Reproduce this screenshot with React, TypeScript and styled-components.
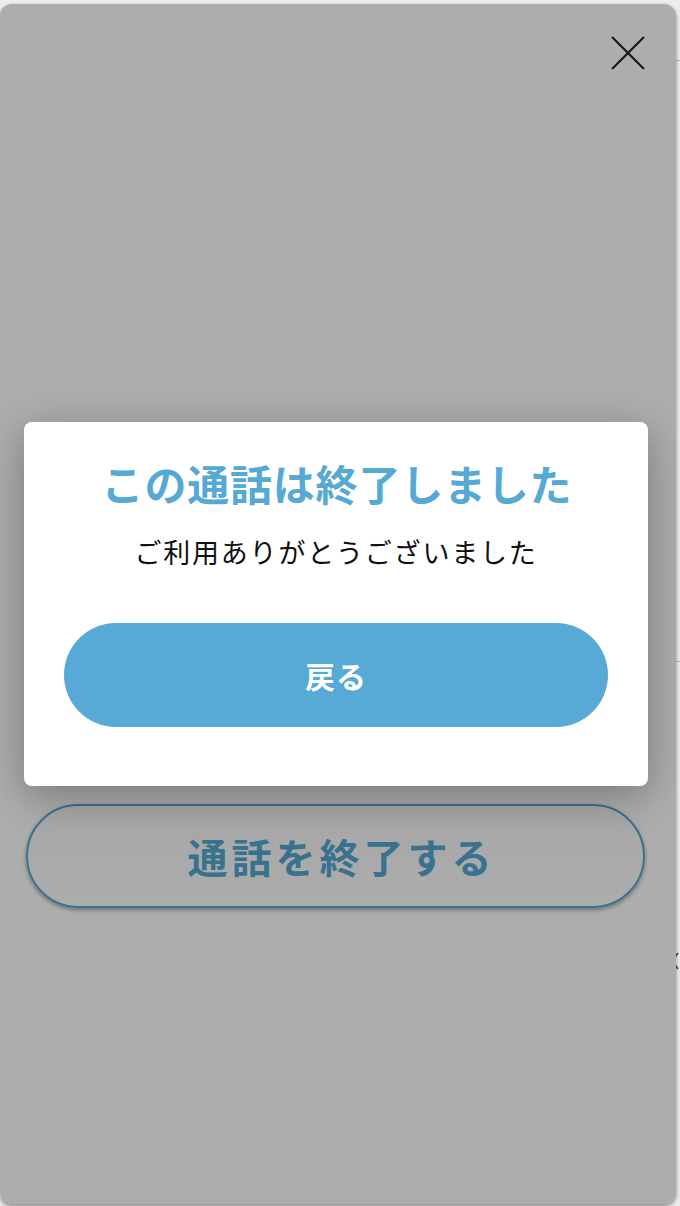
import styled, { createGlobalStyle } from "styled-components";

const GlobalStyle = createGlobalStyle`
  html, body {
    margin: 0;
    padding: 0;
    background: #ededed;
  }
  body {
    font-family: "Noto Sans CJK JP", "Noto Sans", sans-serif;
  }
`;

const Screen = styled.div`
  position: relative;
  width: 680px;
  height: 1206px;
  overflow: hidden;
  background: #ededed;
`;

// the page sitting behind the sheet (only a sliver shows on the right)
const BackPage = styled.div`
  display: flex;
  flex-direction: column;
  height: 100%;
`;

const BackHeader = styled.div`
  height: 60px;
  border-bottom: 1px solid #b4b4b4;
`;

const BackSection = styled.div`
  height: 600px;
  border-bottom: 1px solid #b4b4b4;
`;

const BackRow = styled.div`
  display: flex;
  justify-content: flex-end;
  padding-top: 290px;
`;

const Sheet = styled.div`
  position: absolute;
  top: 4px;
  left: 0;
  width: 676px;
  height: 1200px;
  background: #ffffff;
  border-radius: 12px;
  box-shadow: 0 2px 4px rgba(0, 0, 0, 0.45);
  display: flex;
  flex-direction: column;
  overflow: hidden;
`;

const TopBar = styled.div`
  display: flex;
  justify-content: flex-end;
  padding: 32px 31px 0 0;
`;

const CloseButton = styled.button`
  width: 34px;
  height: 34px;
  padding: 0;
  border: none;
  background: transparent;
  display: flex;
  align-items: center;
  justify-content: center;
`;

const Stage = styled.div`
  height: 734px;
`;

const EndCallButton = styled.button`
  margin-left: 26px;
  width: 619px;
  height: 104px;
  border-radius: 52px;
  border: 2px solid #55a9d3;
  background: linear-gradient(180deg, #f6f6f6 0%, #ffffff 100%);
  box-shadow: 0 2px 4px rgba(0, 0, 0, 0.35);
  color: #55a9d3;
  font-family: "Noto Sans CJK JP", sans-serif;
  font-size: 40px;
  font-weight: 700;
  letter-spacing: 4px;
  padding: 0 0 0 12px;
`;

const Overlay = styled.div`
  position: absolute;
  inset: 0;
  background: rgba(0, 0, 0, 0.32);
  display: flex;
  align-items: center;
  padding-left: 24px;
`;

const Modal = styled.div`
  width: 624px;
  height: 364px;
  box-sizing: border-box;
  background: #ffffff;
  border-radius: 8px;
  box-shadow: 0 10px 40px rgba(0, 0, 0, 0.3);
  display: flex;
  flex-direction: column;
  align-items: center;
  padding: 38px 40px 0;
`;

const Title = styled.h2`
  margin: 0;
  color: #55a9d3;
  font-size: 42px;
  font-weight: 700;
  line-height: 46px;
  letter-spacing: 0.8px;
  padding-left: 2px;
`;

const Message = styled.p`
  margin: 28px 0 0;
  color: #111;
  font-size: 27px;
  font-weight: 400;
  line-height: 36px;
  letter-spacing: 1.8px;
`;

const BackButton = styled.button`
  margin-top: 53px;
  width: 544px;
  height: 104px;
  border: none;
  border-radius: 52px;
  background: #56aad5;
  color: #ffffff;
  font-family: "Noto Sans CJK JP", sans-serif;
  font-size: 30px;
  font-weight: 700;
  letter-spacing: 1px;
  padding: 0;
`;

export default function App() {
  return (
    <>
      <GlobalStyle />
      <Screen>
        <BackPage>
          <BackHeader />
          <BackSection />
          <BackRow>
            <svg width="10" height="18" viewBox="0 0 10 18">
              <path d="M8 1 L2 9 L8 17" fill="none" stroke="#555" strokeWidth="2" />
            </svg>
          </BackRow>
        </BackPage>

        <Sheet>
          <TopBar>
            <CloseButton aria-label="閉じる">
              <svg width="34" height="34" viewBox="0 0 34 34">
                <path
                  d="M1 1 L33 33 M33 1 L1 33"
                  stroke="#262626"
                  strokeWidth="2.2"
                  fill="none"
                />
              </svg>
            </CloseButton>
          </TopBar>
          <Stage />
          <EndCallButton>通話を終了する</EndCallButton>

          <Overlay>
            <Modal>
              <Title>この通話は終了しました</Title>
              <Message>ご利用ありがとうございました</Message>
              <BackButton>戻る</BackButton>
            </Modal>
          </Overlay>
        </Sheet>
      </Screen>
    </>
  );
}
